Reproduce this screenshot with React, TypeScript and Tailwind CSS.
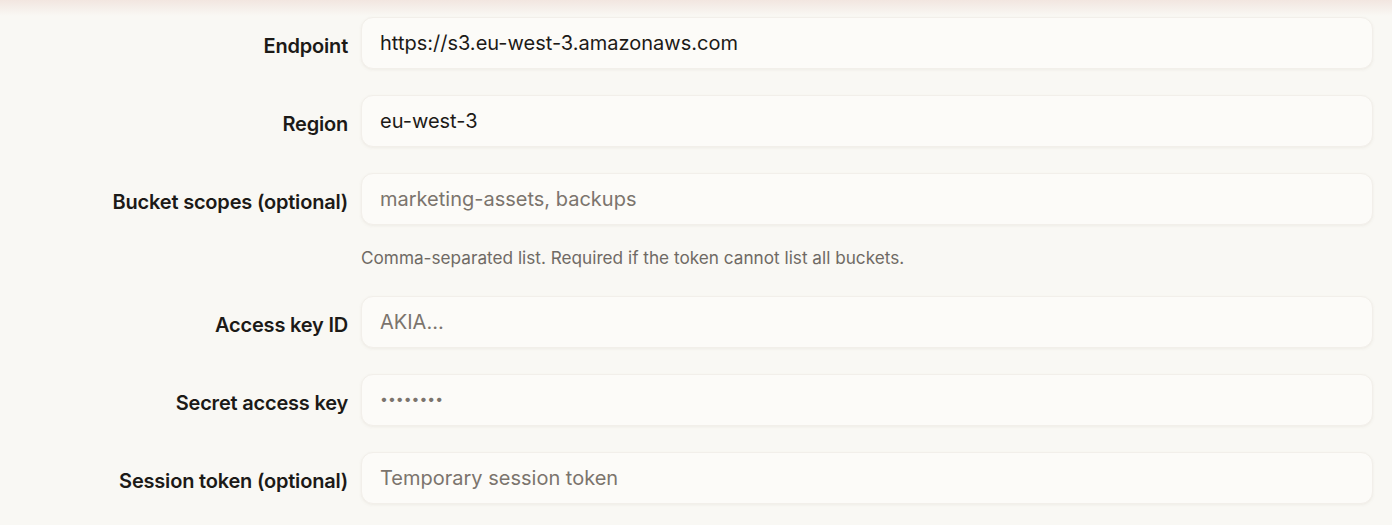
import React from "react";

type Field = {
    label: string;
    value?: string;
    placeholder?: string;
    type?: string;
    hint?: string;
};

const fields: Field[] = [
    { label: "Endpoint", value: "https://s3.eu-west-3.amazonaws.com" },
    { label: "Region", value: "eu-west-3" },
    {
        label: "Bucket scopes (optional)",
        placeholder: "marketing-assets, backups",
        hint: "Comma-separated list. Required if the token cannot list all buckets.",
    },
    { label: "Access key ID", placeholder: "AKIA…" },
    { label: "Secret access key", placeholder: "••••••••", type: "password" },
    { label: "Session token (optional)", placeholder: "Temporary session token" },
];

const FieldRow = ({ field }: { field: Field }) => {
    const isSecret = field.type === "password";
    return (
        <div className="flex flex-col">
            <div className="flex items-center gap-[13px]">
                <label className="w-[348px] shrink-0 pt-[5px] text-right text-[20px] font-semibold tracking-[-0.01em] text-[#1c1a17]">
                    {field.label}
                </label>
                <input
                    type={field.type ?? "text"}
                    defaultValue={field.value}
                    placeholder={field.placeholder}
                    className={`h-[52px] flex-1 rounded-xl border border-[#f2efea] bg-[#fcfbf8] px-[18px] text-[20px] text-[#1c1a17] shadow-[0_1px_3px_rgba(120,100,80,0.08)] outline-none placeholder:text-[#7b746d] ${
                        isSecret ? "placeholder:text-[14px] pb-[6px]" : ""
                    }`}
                />
            </div>
            {field.hint && (
                <p className="mt-[21px] pl-[361px] text-[17.2px] leading-6 text-[#6f6a64]">
                    {field.hint}
                </p>
            )}
        </div>
    );
};

export default function App() {
    return (
        <div
            className="relative min-h-screen bg-[#f9f8f4]"
            style={{ fontFamily: "Inter, 'Noto Sans', sans-serif" }}
        >
            {/* header shadow */}
            <div className="pointer-events-none absolute inset-x-0 top-0 h-4 bg-gradient-to-b from-[#f2e6e0] to-transparent" />
            <div className="flex flex-col gap-[26px] pr-[19px] pt-[17px] pb-6">
                {fields.map((f) => (
                    <FieldRow key={f.label} field={f} />
                ))}
            </div>
        </div>
    );
}
